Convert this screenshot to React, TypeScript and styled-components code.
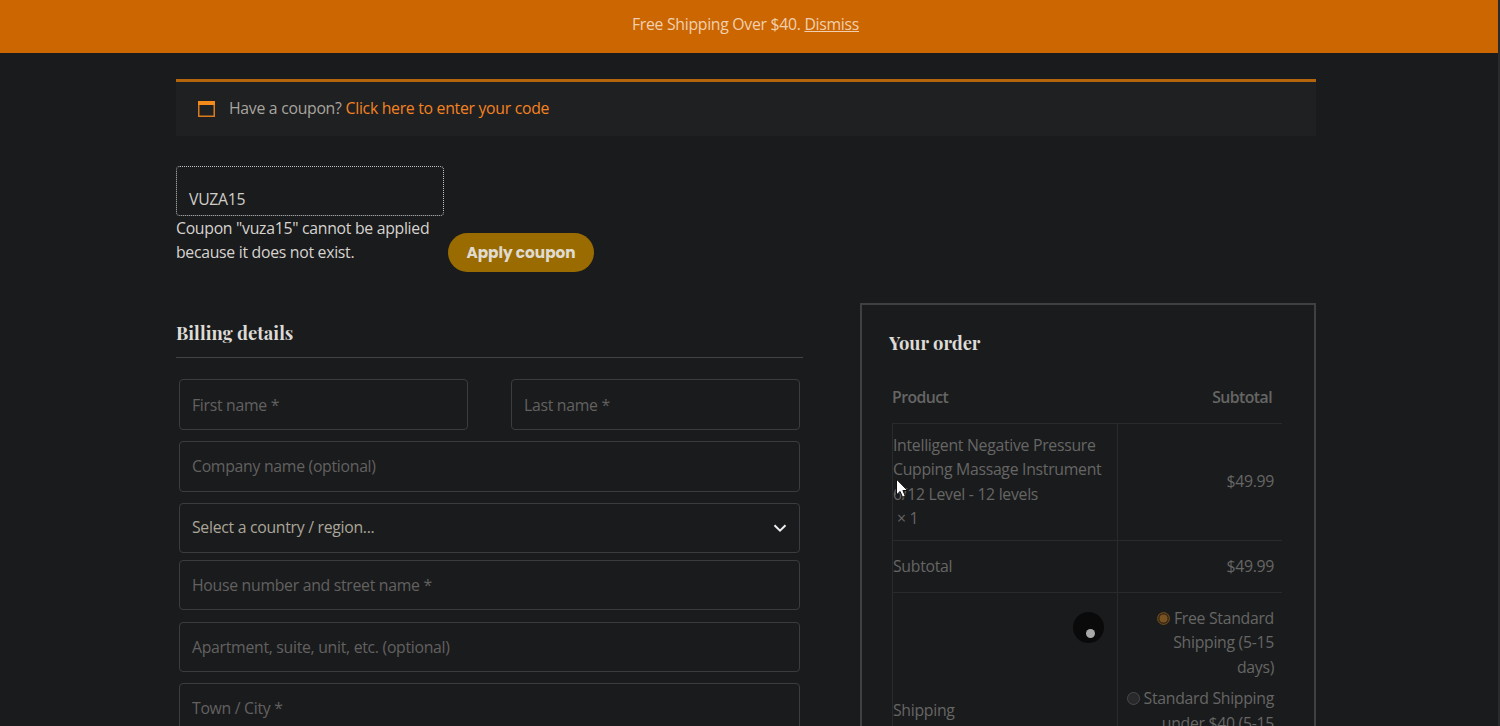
import React from "react";
import styled, { createGlobalStyle } from "styled-components";

const Global = createGlobalStyle`
  *, *::before, *::after { box-sizing: border-box; }
  html, body { margin: 0; padding: 0; background: #1a1b1d; overflow: hidden; }
  body { font-family: "Open Sans", sans-serif; font-size: 15.8px; letter-spacing: -0.29px; line-height: 24.4px; color: #d0cdc8; }
`;

const Page = styled.div`
  position: relative;
  height: 726px;
  overflow: hidden;
  border-right: 2px solid #292a2c;
  background: #1a1b1d;
`;

const Banner = styled.header`
  height: 53px;
  padding: 12px 7px 0 0;
  background: #cc6600;
  color: #f0d0b0;
  text-align: center;
  a { color: inherit; text-decoration: underline; }
`;

const Main = styled.main`
  width: 1140px;
  margin: 26px 0 0 176px;
`;

const Notice = styled.div`
  display: flex;
  align-items: center;
  height: 57px;
  padding: 0 0 1px 22px;
  border-top: 3px solid #b4640a;
  background: #1f2022;
  color: #a8a49e;
  a { color: #f58220; margin-left: 4px; }
  svg { margin-right: 14px; }
`;

const CouponForm = styled.form`
  display: flex;
  align-items: flex-end;
  gap: 4px;
  height: 107px;
  margin-top: 30px;
`;

const CouponColumn = styled.div`
  width: 268px;
  height: 107px;
`;

const CouponInput = styled.div`
  height: 50px;
  padding: 20px 12px 0;
  border: 1px dotted #c4c4c4;
  border-radius: 4px;
`;

const CouponError = styled.p`
  margin: 0;
  color: #d6d3ce;
  white-space: nowrap;
`;

const ApplyButton = styled.button`
  width: 146px;
  height: 39px;
  padding: 0;
  border: 0;
  border-radius: 20px;
  margin-bottom: 1px;
  background: #996b00;
  color: #e0dbd0;
  font: 700 15.3px "Poppins", "Inter", sans-serif;
  white-space: nowrap;
`;

const Columns = styled.div`
  display: flex;
  justify-content: space-between;
  align-items: flex-start;
  margin-top: 30px;
`;

const Billing = styled.section`
  width: 627px;
`;

const Heading = styled.h3`
  margin: 0;
  font: 700 18.4px/26px "Playfair Display", "Liberation Serif", serif;
  letter-spacing: 0;
  color: #dedbd6;
  white-space: nowrap;
`;

const BillingHead = styled.div`
  height: 55px;
  padding-top: 17px;
  border-bottom: 1px solid #424446;
`;

const Fields = styled.div`
  display: flex;
  flex-direction: column;
  padding: 21px 3px 0;
`;

const NameRow = styled.div`
  display: flex;
  justify-content: space-between;
`;

const Field = styled.div<{ $width?: number; $height?: number; $gap?: number; $drop?: number; $active?: boolean }>`
  display: flex;
  flex: none;
  align-items: center;
  justify-content: space-between;
  width: ${(p) => (p.$width ? `${p.$width}px` : "100%")};
  height: ${(p) => p.$height ?? 51}px;
  margin-bottom: ${(p) => p.$gap ?? 11}px;
  padding: ${(p) => p.$drop ?? 0}px 12px 0;
  border: 1px solid #3b3c3f;
  border-radius: 4px;
  color: ${(p) => (p.$active ? "#aaa698" : "#626160")};
`;

const SelectLabel = styled.span`
  margin-bottom: 2px;
`;

const Order = styled.section`
  width: 456px;
  height: 560px;
  padding: 25px 30px 0 27px;
  border: 2px solid #3f4042;
`;

const Table = styled.div`
  position: relative;
  width: 390px;
  margin: 15px 0 0 3px;
  color: #666664;
`;

const TableHead = styled.div`
  display: flex;
  justify-content: space-between;
  align-items: center;
  height: 52px;
  padding-right: 10px;
  font-weight: 600;
  letter-spacing: -0.55px;
`;

const Row = styled.div<{ $height: number }>`
  display: grid;
  grid-template-columns: 225px 165px;
  height: ${(p) => p.$height}px;
  border-top: 1px solid #292a2c;
`;

const Cell = styled.div<{ $right?: boolean }>`
  display: flex;
  flex-direction: column;
  justify-content: center;
  border-left: 1px solid #292a2c;
  text-align: ${(p) => (p.$right ? "right" : "left")};
  padding-right: ${(p) => (p.$right ? 8 : 0)}px;
  padding-bottom: 1px;
  white-space: nowrap;
`;

const Quantity = styled.span`
  padding-left: 4px;
`;

const Options = styled(Cell)`
  justify-content: flex-start;
  padding-top: 13px;
`;

const Option = styled.div`
  margin-bottom: 7px;
`;

const Radio = styled.span<{ $checked?: boolean }>`
  display: inline-block;
  width: 13px;
  height: 13px;
  margin-right: 4px;
  vertical-align: -1px;
  border: 1px solid ${(p) => (p.$checked ? "#684719" : "#4a4a4b")};
  border-radius: 50%;
  background: ${(p) => (p.$checked ? "#79531f" : "#29292b")};
  box-shadow: inset 0 0 0 1.5px ${(p) => (p.$checked ? "#35291b" : "#29292b")};
`;

const Spinner = styled.div`
  position: absolute;
  left: 181px;
  top: 241px;
  width: 31px;
  height: 31px;
  border-radius: 50%;
  background: #0a0a0b;
  &::after {
    content: "";
    position: absolute;
    left: 13px;
    top: 17px;
    width: 9px;
    height: 9px;
    border-radius: 50%;
    background: #a9a9a9;
  }
`;

const Cursor = styled.svg`
  position: absolute;
  left: 895px;
  top: 478px;
`;

export default function App() {
  return (
    <Page>
      <Global />
      <Banner>
        Free Shipping Over $40. <a>Dismiss</a>
      </Banner>
      <Main>
        <Notice>
          <svg width="17" height="16" viewBox="0 0 17 16">
            <path d="M0.75 1V15.25H16.25V1" fill="none" stroke="#d97a1c" strokeWidth="1.5" />
            <path d="M0 0H17V4H0Z" fill="#f58a1c" />
          </svg>
          <span>Have a coupon?</span>
          <a>Click here to enter your code</a>
        </Notice>
        <CouponForm>
          <CouponColumn>
            <CouponInput>VUZA15</CouponInput>
            <CouponError>
              Coupon "vuza15" cannot be applied
              <br />
              because it does not exist.
            </CouponError>
          </CouponColumn>
          <ApplyButton type="button">Apply coupon</ApplyButton>
        </CouponForm>
        <Columns>
          <Billing>
            <BillingHead>
              <Heading>Billing details</Heading>
            </BillingHead>
            <Fields>
              <NameRow>
                <Field $width={289} $drop={2}>First name *</Field>
                <Field $width={289} $drop={2}>Last name *</Field>
              </NameRow>
              <Field>Company name (optional)</Field>
              <Field $height={50} $gap={7} $active>
                <SelectLabel>Select a country / region...</SelectLabel>
                <svg width="14" height="9" viewBox="0 0 14 9">
                  <path d="M1.5 1.2L7 6.7L12.5 1.2" fill="none" stroke="#eeeeee" strokeWidth="2" />
                </svg>
              </Field>
              <Field $height={50} $gap={12} $drop={1}>House number and street name *</Field>
              <Field $height={50}>Apartment, suite, unit, etc. (optional)</Field>
              <Field>Town / City *</Field>
            </Fields>
          </Billing>
          <Order>
            <Heading>Your order</Heading>
            <Table>
              <TableHead>
                <span>Product</span>
                <span>Subtotal</span>
              </TableHead>
              <Row $height={117}>
                <Cell>
                  <span>Intelligent Negative Pressure</span>
                  <span>Cupping Massage Instrument</span>
                  <span>6/12 Level - 12 levels</span>
                  <Quantity>× 1</Quantity>
                </Cell>
                <Cell $right>$49.99</Cell>
              </Row>
              <Row $height={52}>
                <Cell>Subtotal</Cell>
                <Cell $right>$49.99</Cell>
              </Row>
              <Row $height={236}>
                <Cell>Shipping</Cell>
                <Options $right>
                  <Option>
                    <Radio $checked />
                    Free Standard
                    <br />
                    Shipping (5-15
                    <br />
                    days)
                  </Option>
                  <Option>
                    <Radio />
                    Standard Shipping
                    <br />
                    under $40 (5-15
                    <br />
                    days)
                  </Option>
                </Options>
              </Row>
              <Spinner />
            </Table>
          </Order>
        </Columns>
      </Main>
      <Cursor width="14" height="21" viewBox="0 0 14 21">
        <path
          d="M1.5 1.2V16.8L5.1 13.5L7.5 19.2L10.3 18L7.9 12.5H12.6Z"
          fill="#ffffff"
          stroke="#101010"
          strokeWidth="1"
        />
      </Cursor>
    </Page>
  );
}
